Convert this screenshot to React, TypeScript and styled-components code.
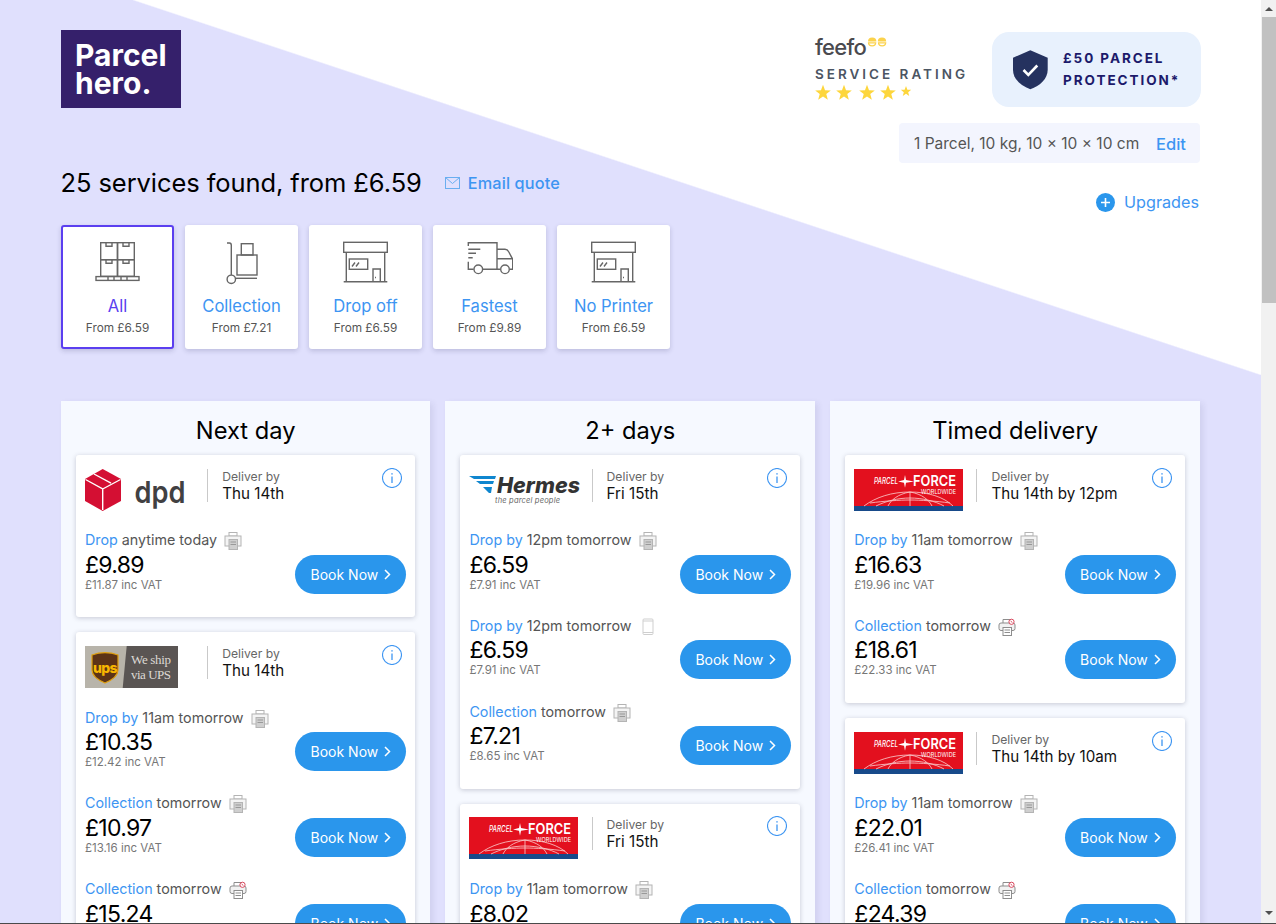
import React from "react";
import styled, { createGlobalStyle } from "styled-components";

const FONT = `Inter, "Noto Sans", "Liberation Sans", sans-serif`;
const BLUE = "#3d95f2";

const Global = createGlobalStyle`
  html, body { margin: 0; padding: 0; height: 924px; overflow: hidden; background: #e0e0fd; }
  body { font-family: ${FONT}; -webkit-font-smoothing: auto; }
  * { box-sizing: border-box; }
`;

const Shell = styled.div`
  display: flex;
  width: 1276px;
  height: 924px;
  border-bottom: 1px solid #4a4a4a;
  overflow: hidden;
`;
const Page = styled.main`
  flex: 0 0 1261px;
  height: 923px;
  overflow: hidden;
  padding: 30px 61px 0;
  background: linear-gradient(to top right, #e0e0fd 49.9%, #fff 50.1%) 133px 0 / 1128px 375px no-repeat, #e0e0fd;
`;
const Scrollbar = styled.div`
  flex: 0 0 15px;
  display: flex;
  flex-direction: column;
  align-items: stretch;
  background: #f1f1f1;
`;
const ScrollArrow = styled.div<{ $down?: boolean }>`
  height: 17px;
  flex: none;
  display: flex;
  align-items: center;
  justify-content: center;
  margin-bottom: ${(p) => (p.$down ? "2px" : "0")};
  &::after {
    content: "";
    border-left: 4px solid transparent;
    border-right: 4px solid transparent;
    ${(p) => (p.$down ? "border-top: 4px solid #505050;" : "border-bottom: 4px solid #505050;")}
  }
`;
const ScrollThumb = styled.div`
  height: 286px;
  flex: none;
  margin-left: 1px;
  background: #c1c1c1;
`;
const ScrollRest = styled.div`
  flex: 1;
`;

const Top = styled.header`
  display: flex;
  justify-content: space-between;
  align-items: flex-start;
`;
const TopLeft = styled.div`
  display: flex;
  flex-direction: column;
  align-items: flex-start;
`;
const TopRight = styled.div`
  display: flex;
  flex-direction: column;
  align-items: flex-end;
  padding-top: 2px;
`;
const Logo = styled.div`
  width: 120px;
  height: 78px;
  background: #35206b;
  color: #fff;
  font-weight: 700;
  font-size: 30px;
  line-height: 28px;
  padding: 11px 0 0 14px;
`;
const TitleRow = styled.div`
  display: flex;
  align-items: center;
  margin-top: 58px;
  height: 32px;
`;
const Title = styled.h1`
  margin: 0 0 0 -0.5px;
  font-size: 25.5px;
  font-weight: 400;
  color: #000;
  letter-spacing: -0.08px;
`;
const EmailLink = styled.a`
  display: flex;
  align-items: center;
  margin: 2px 0 0 23px;
  color: ${BLUE};
  font-size: 16.3px;
  font-weight: 500;
  letter-spacing: 0.12px;
  gap: 8px;
`;
const Tabs = styled.div`
  display: flex;
  gap: 11px;
  margin-top: 27px;
`;
const Tab = styled.div<{ $active?: boolean }>`
  width: 113px;
  height: 124px;
  background: #fff;
  border-radius: 3px;
  box-shadow: 0 2px 5px rgba(30, 30, 80, 0.18);
  display: flex;
  flex-direction: column;
  align-items: center;
  padding-top: ${(p) => (p.$active ? "14px" : "16px")};
  border: ${(p) => (p.$active ? "2px solid #5b3ff0" : "none")};
`;
const TabIcon = styled.div`
  height: 46px;
  display: flex;
  align-items: flex-start;
  justify-content: center;
`;
const TabLabel = styled.div<{ $active?: boolean }>`
  margin-top: 9px;
  font-size: 16.6px;
  line-height: 20px;
  color: ${(p) => (p.$active ? "#5b3ff0" : BLUE)};
`;
const TabFrom = styled.div`
  margin-top: 3px;
  font-size: 11.8px;
  line-height: 18px;
  color: #555;
`;

const TrustRow = styled.div`
  display: flex;
  align-items: flex-start;
  margin-right: -1px;
`;
const Feefo = styled.div`
  width: 177px;
  padding-top: 5px;
`;
const FeefoLogo = styled.div`
  display: flex;
  align-items: flex-start;
  height: 21px;
  font-size: 22px;
  line-height: 21px;
  font-weight: 500;
  color: #4a4a4f;
  letter-spacing: -0.7px;
`;
const RatingLabel = styled.div`
  margin-top: 6px;
  font-size: 13.5px;
  line-height: 20px;
  font-weight: 600;
  color: #4b5563;
  letter-spacing: 3px;
  white-space: nowrap;
`;
const Protection = styled.div`
  width: 209px;
  height: 75px;
  border-radius: 17px;
  background: #e8f1fd;
  display: flex;
  align-items: center;
  padding-left: 21px;
  padding-bottom: 2px;
  gap: 15px;
`;
const ProtectionText = styled.div`
  font-size: 13.5px;
  line-height: 22px;
  font-weight: 700;
  letter-spacing: 1.95px;
  color: #1c1a6b;
  white-space: nowrap;
`;
const Summary = styled.div`
  margin-top: 16px;
  width: 301px;
  height: 40px;
  border-radius: 4px;
  background: #f3f5fe;
  display: flex;
  align-items: center;
  justify-content: space-between;
  padding: 1px 14px 0 15px;
  font-size: 15.5px;
  color: #555;
  white-space: nowrap;
`;
const EditLink = styled.a`
  color: ${BLUE};
  font-size: 16.5px;
  font-weight: 500;
`;
const Upgrades = styled.a`
  margin-top: 29px;
  margin-right: 1px;
  display: flex;
  align-items: center;
  gap: 9px;
  color: ${BLUE};
  font-size: 16.2px;
  height: 20px;
`;
const PlusDot = styled.span`
  width: 19px;
  height: 19px;
  border-radius: 50%;
  background: #2a96ec;
  display: flex;
  align-items: center;
  justify-content: center;
`;

const Columns = styled.section`
  display: grid;
  grid-template-columns: 369.4px 369.9px 369.7px;
  gap: 15px;
  margin-top: 52px;
  align-items: start;
`;
const Column = styled.div`
  background: #f6f9ff;
  padding: 0 15px;
  height: 540px;
  box-shadow: 3px 2px 6px rgba(40, 40, 90, 0.09);
`;
const ColumnTitle = styled.h2`
  margin: 0;
  height: 54px;
  line-height: 59px;
  text-align: center;
  font-size: 23.7px;
  font-weight: 400;
  color: #000;
`;
const Card = styled.article`
  background: #fff;
  border-radius: 3px;
  box-shadow: 0 1px 5px rgba(30, 30, 60, 0.22);
  padding: 0 9px 2px;
  margin-bottom: 15px;
`;
const CardHead = styled.div`
  display: flex;
  align-items: flex-start;
  height: 74.9px;
  padding-top: 13.6px;
`;
const LogoSlot = styled.div`
  width: 122.2px;
  height: 42px;
  flex: none;
  display: flex;
`;
const Divider = styled.div`
  width: 1px;
  height: 33px;
  background: #c9c9c9;
  margin-right: 14px;
  flex: none;
`;
const Deliver = styled.div`
  display: flex;
  flex-direction: column;
`;
const DeliverLabel = styled.div`
  font-size: 12.2px;
  line-height: 15px;
  color: #666;
`;
const DeliverValue = styled.div`
  font-size: 15.2px;
  line-height: 20px;
  color: #111;
  white-space: nowrap;
`;
const InfoButton = styled.div`
  margin-left: auto;
  margin-right: 4px;
  margin-top: -1px;
  width: 20px;
  height: 20px;
`;
const Row = styled.div`
  display: flex;
  justify-content: space-between;
  align-items: flex-start;
  height: 85.6px;
`;
const RowInfo = styled.div`
  display: flex;
  flex-direction: column;
`;
const RowLine = styled.div`
  display: flex;
  align-items: center;
  height: 20px;
  font-size: 14.3px;
  color: #555;
  white-space: nowrap;
`;
const RowHow = styled.span`
  color: ${BLUE};
  margin-right: 4px;
`;
const MiniIcon = styled.span`
  margin-left: 7px;
  margin-top: 3px;
  display: flex;
`;
const Price = styled.div`
  font-size: 23px;
  line-height: 30px;
  letter-spacing: -0.7px;
  color: #000;
`;
const Vat = styled.div`
  font-size: 11.5px;
  line-height: 14px;
  margin-top: -2px;
  color: #777;
`;
const BookButton = styled.button`
  margin-top: 25px;
  width: 111px;
  height: 39px;
  border: 0;
  border-radius: 20px;
  background: #2a96ec;
  color: #fff;
  font-family: ${FONT};
  font-size: 14px;
  display: flex;
  align-items: center;
  justify-content: center;
  gap: 6px;
  padding: 0;
`;

/* ---------- drawings ---------- */

const ink = { fill: "none", stroke: "#666", strokeWidth: 1.4 } as const;

const PalletIcon = () => (
  <svg width="45" height="41" viewBox="95 241 45 41" {...ink}>
    <rect x="100.7" y="242.7" width="16.6" height="17" />
    <rect x="117.7" y="242.7" width="16.6" height="17" />
    <rect x="100.7" y="259.7" width="16.6" height="16.6" />
    <rect x="117.7" y="259.7" width="16.6" height="16.6" />
    <path d="M106 243v3.2h6V243M123 243v3.2h6V243M106 260v3.2h6V260M123 260v3.2h6V260" />
    <rect x="96" y="276.6" width="43" height="3.8" />
    <path d="M108 276.6v3.8M114 276.6v3.8M121 276.6v3.8M127 276.6v3.8" />
  </svg>
);
const TrolleyIcon = () => (
  <svg width="36" height="44" viewBox="222 241 36 44" {...ink}>
    <path d="M225 243h2.5c1.2 0 1.8 1 1.8 2.2V275" />
    <circle cx="229.3" cy="279.3" r="4.2" />
    <path d="M234 278.3h21" />
    <rect x="235" y="255" width="20" height="20" />
    <rect x="239.3" y="243.7" width="11.7" height="11.3" />
  </svg>
);
const ShopIcon = () => (
  <svg width="46" height="42" viewBox="343 241 46 42" {...ink}>
    <rect x="343.7" y="242.3" width="43.6" height="10" />
    <path d="M346.3 252.3v29.4M384.7 252.3v29.4M343.7 281.7h43.6" />
    <rect x="349.3" y="259" width="18.4" height="10.3" />
    <path d="M352 266.5l3-4M356 266.5l3-4" />
    <path d="M373 281.7V269h7.3v12.7" />
    <path d="M375 277.5h1" />
  </svg>
);
const TruckIcon = () => (
  <svg width="46" height="34" viewBox="466 245 46 34" {...ink}>
    <path d="M467.3 250v-3.3H496v26.6M467.3 253.3h12M467.3 257.3h7.7M467.3 261.7h4.4" />
    <path d="M467.3 265.7v7.6h5.4M482 273.3h17.3M508.7 273.3h3v-10l-4-7.5c-.8-1.6-1.8-2.5-3.7-2.5h-8M496 262.7h15.7" />
    <circle cx="477.3" cy="273.3" r="4.3" />
    <circle cx="504" cy="273.3" r="4.3" />
  </svg>
);
const MailIcon = () => (
  <svg width="15" height="12" viewBox="0 0 15 12" fill="none" stroke="#6aaef0" strokeWidth="1">
    <rect x="0.5" y="0.5" width="14" height="11" />
    <path d="M0.5 0.5l7 6 7-6" />
  </svg>
);
const Shield = () => (
  <svg width="35" height="40" viewBox="1013 49 35 40" style={{ marginTop: 2 }}>
    <path d="M1030.3 49.3l17.4 7.4v12c0 9-7.5 16-17.4 19.6-9.9-3.6-17.3-10.6-17.3-19.6v-12z" fill="#25325f" />
    <path d="M1023.5 69l4.8 4.8 9-9.3" fill="none" stroke="#fff" strokeWidth="2.6" />
  </svg>
);
const FeefoEyes = () => (
  <svg width="20" height="10" viewBox="0 0 20 10" style={{ marginLeft: 1 }}>
    <path d="M1 4.4a4.2 4 0 0 1 8.4 0zM10.8 4.4a4.2 4 0 0 1 8.4 0z" fill="#fbd24c" />
    <path d="M1.5 5.8a3.6 3 0 0 0 7.2 0zM11.5 5.8a3.6 3 0 0 0 7.2 0z" fill="none" stroke="#fbd24c" strokeWidth="1.2" />
  </svg>
);
const starPath = (cx: number, cy: number, r: number) => {
  const pts: string[] = [];
  for (let i = 0; i < 10; i++) {
    const a = (Math.PI / 5) * i - Math.PI / 2;
    const rr = i % 2 ? r * 0.42 : r;
    pts.push(`${(cx + rr * Math.cos(a)).toFixed(2)},${(cy + rr * Math.sin(a)).toFixed(2)}`);
  }
  return pts.join(" ");
};
const Stars = () => (
  <svg width="100" height="20" viewBox="815 85 100 20" style={{ display: "block" }}>
    {[823, 844, 867, 888].map((x) => (
      <polygon key={x} points={starPath(x, 94, 8.2)} fill="#fdd63c" />
    ))}
    <polygon points={starPath(906, 92.5, 5.5)} fill="#fdd63c" />
  </svg>
);
const InfoIcon = () => (
  <svg width="20" height="20" viewBox="0 0 20 20" fill="none" stroke="#3d95f2" strokeWidth="1.1">
    <circle cx="10" cy="10" r="9.5" />
    <path d="M10 8.5v6.5" strokeWidth="1.3" />
    <path d="M10 5.2v1.4" strokeWidth="1.5" />
  </svg>
);
const Chevron = () => (
  <svg width="7" height="11" viewBox="0 0 7 11" fill="none" stroke="#fff" strokeWidth="1.5">
    <path d="M1 1l4.5 4.5L1 10" />
  </svg>
);
const PaperIcon = () => (
  <svg width="18" height="18" viewBox="0 0 18 18" fill="none" stroke="#b4b4b4" strokeWidth="1">
    <rect x="5" y="0.5" width="8" height="3.5" />
    <rect x="1" y="4" width="16" height="10" fill="#f4f4f4" />
    <rect x="5" y="7.5" width="8.5" height="10" fill="#cfcfcf" />
    <path d="M6.5 10h5.5M6.5 12.5h5.5" stroke="#999" />
  </svg>
);
const PhoneIcon = () => (
  <svg width="18" height="18" viewBox="0 0 18 18" fill="none" stroke="#cfcfcf" strokeWidth="1">
    <rect x="4" y="1" width="10" height="15.5" rx="1" />
    <path d="M4 3h10M4 14.5h10" />
  </svg>
);
const PrinterIcon = () => (
  <svg width="18" height="18" viewBox="0 0 18 18" fill="none" stroke="#8d8d8d" strokeWidth="1">
    <path d="M5 5V1.5h8V5" />
    <rect x="1" y="5" width="16" height="7.5" rx="2" fill="#f2f2f2" />
    <rect x="5" y="9.5" width="8.5" height="8" fill="#fff" />
    <path d="M6.5 12h5.5M6.5 14.5h5.5" />
    <circle cx="13.5" cy="3.8" r="2.6" fill="#fff" stroke="#d9475d" />
    <path d="M12.6 3l1.8 1.6" stroke="#d9475d" />
  </svg>
);
const MINI = { paper: PaperIcon, phone: PhoneIcon, printer: PrinterIcon };

const DpdLogo = () => (
  <svg width="101" height="42" viewBox="85 469 101 42">
    <path d="M102.7 469L121 479v22l-18.3 10L85 501v-22z" fill="#d40f33" />
    <path d="M85.5 479.5l17.2 9.5V510M120.5 479.5l-17.8 9.5M94 474l17 9.2" fill="none" stroke="#fff" strokeWidth="1.4" />
    <text x="134.5" y="502.5" fontFamily="Inter, sans-serif" fontWeight="600" fontSize="30" fill="#414042" textLength="51" lengthAdjust="spacingAndGlyphs">dpd</text>
  </svg>
);
const UpsLogo = () => (
  <svg width="93" height="42" viewBox="85 646 93 42">
    <rect x="85" y="646" width="93" height="42" fill="#b8b4aa" />
    <path d="M126.7 646H178v42h-55.3z" fill="#5a5553" />
    <path d="M92 655c8-3 18-3 26 0v15c0 6-6 10-13 13-7-3-13-7-13-13z" fill="#5c3317" stroke="#e0a010" strokeWidth="1.2" />
    <text x="105" y="673" textAnchor="middle" fontFamily="Inter, sans-serif" fontWeight="800" fontSize="14" letterSpacing="-0.6" fill="#f7b600">ups</text>
    <text x="131" y="664" fontFamily="'Liberation Serif', serif" fontSize="13" fill="#ddd9d4" textLength="40">We ship</text>
    <text x="131" y="679" fontFamily="'Liberation Serif', serif" fontSize="13" fill="#ddd9d4" textLength="40">via UPS</text>
  </svg>
);
const HermesLogo = () => (
  <svg width="112" height="42" viewBox="469 469 112 42">
    <path d="M469 476h27l-1 3h-21zM476 481h18l-1 3h-13zM483 487h9l-1 6h-2z" fill="#0f86cf" />
    <text x="497" y="493" fontFamily="Inter, sans-serif" fontWeight="800" fontStyle="italic" fontSize="22" fill="#333" textLength="83" lengthAdjust="spacingAndGlyphs">Hermes</text>
    <text x="495" y="503" fontFamily="Inter, sans-serif" fontStyle="italic" fontSize="7.5" fill="#666" textLength="65">the parcel people</text>
  </svg>
);
const ForceLogo = () => (
  <svg width="109" height="42" viewBox="854 469 109 42">
    <rect x="854" y="469" width="109" height="37" fill="#e3101e" />
    <rect x="854" y="506" width="109" height="5" fill="#174a8a" />
    <g fill="none" stroke="#fbd0d0" strokeWidth="0.8">
      <path d="M864 506c12-9 28-14 46-14s34 5 43 14" />
      <path d="M876 506c10-5 22-8 34-8s25 3 34 8" />
      <path d="M888 506c3-6 10-12 22-14M932 506c-3-6-10-12-22-14M910 492v14" />
      <path d="M870 503c14-2 30-3 40-3s26 1 40 3" />
    </g>
    <text x="874" y="484" fontFamily="Inter, sans-serif" fontStyle="italic" fontWeight="500" fontSize="8.5" fill="#fff" textLength="24" lengthAdjust="spacingAndGlyphs">PARCEL</text>
    <path d="M905 475l1 5 8 1.5-8 1.2-1 5-1-5-6-1.2 6-1.5z" fill="#fff" />
    <text x="913" y="486" fontFamily="Inter, sans-serif" fontWeight="600" fontSize="15" fill="#fff" textLength="43" lengthAdjust="spacingAndGlyphs">FORCE</text>
    <text x="921" y="494" fontFamily="Inter, sans-serif" fontSize="5.5" fill="#fff" textLength="35">WORLDWIDE</text>
  </svg>
);

/* ---------- data ---------- */

type RowData = { how: string; rest: string; price: string; vat: string; icon: keyof typeof MINI };
type CardData = { logo: React.ComponentType; when: string; rows: RowData[] };

const dropBy = (t: string) => ({ how: "Drop by", rest: t });
const coll = { how: "Collection", rest: "tomorrow" };

const COLUMNS: { title: string; cards: CardData[] }[] = [
  {
    title: "Next day",
    cards: [
      {
        logo: DpdLogo,
        when: "Thu 14th",
        rows: [{ how: "Drop", rest: "anytime today", price: "£9.89", vat: "£11.87 inc VAT", icon: "paper" }],
      },
      {
        logo: UpsLogo,
        when: "Thu 14th",
        rows: [
          { ...dropBy("11am tomorrow"), price: "£10.35", vat: "£12.42 inc VAT", icon: "paper" },
          { ...coll, price: "£10.97", vat: "£13.16 inc VAT", icon: "paper" },
          { ...coll, price: "£15.24", vat: "£18.29 inc VAT", icon: "printer" },
        ],
      },
    ],
  },
  {
    title: "2+ days",
    cards: [
      {
        logo: HermesLogo,
        when: "Fri 15th",
        rows: [
          { ...dropBy("12pm tomorrow"), price: "£6.59", vat: "£7.91 inc VAT", icon: "paper" },
          { ...dropBy("12pm tomorrow"), price: "£6.59", vat: "£7.91 inc VAT", icon: "phone" },
          { ...coll, price: "£7.21", vat: "£8.65 inc VAT", icon: "paper" },
        ],
      },
      {
        logo: ForceLogo,
        when: "Fri 15th",
        rows: [{ ...dropBy("11am tomorrow"), price: "£8.02", vat: "£9.62 inc VAT", icon: "paper" }],
      },
    ],
  },
  {
    title: "Timed delivery",
    cards: [
      {
        logo: ForceLogo,
        when: "Thu 14th by 12pm",
        rows: [
          { ...dropBy("11am tomorrow"), price: "£16.63", vat: "£19.96 inc VAT", icon: "paper" },
          { ...coll, price: "£18.61", vat: "£22.33 inc VAT", icon: "printer" },
        ],
      },
      {
        logo: ForceLogo,
        when: "Thu 14th by 10am",
        rows: [
          { ...dropBy("11am tomorrow"), price: "£22.01", vat: "£26.41 inc VAT", icon: "paper" },
          { ...coll, price: "£24.39", vat: "£29.27 inc VAT", icon: "printer" },
        ],
      },
    ],
  },
];

const TABS = [
  { label: "All", from: "From £6.59", icon: PalletIcon, active: true },
  { label: "Collection", from: "From £7.21", icon: TrolleyIcon },
  { label: "Drop off", from: "From £6.59", icon: ShopIcon },
  { label: "Fastest", from: "From £9.89", icon: TruckIcon },
  { label: "No Printer", from: "From £6.59", icon: ShopIcon },
];

const ServiceRow = ({ how, rest, price, vat, icon }: RowData) => {
  const Icon = MINI[icon];
  return (
    <Row>
      <RowInfo>
        <RowLine>
          <RowHow>{how}</RowHow>
          {rest}
          <MiniIcon>
            <Icon />
          </MiniIcon>
        </RowLine>
        <Price>{price}</Price>
        <Vat>{vat}</Vat>
      </RowInfo>
      <BookButton>
        Book Now <Chevron />
      </BookButton>
    </Row>
  );
};

export default function App() {
  return (
    <>
      <Global />
      <Shell>
        <Page>
          <Top>
            <TopLeft>
              <Logo>
                Parcel
                <br />
                hero.
              </Logo>
              <TitleRow>
                <Title>25 services found, from £6.59</Title>
                <EmailLink>
                  <MailIcon />
                  Email quote
                </EmailLink>
              </TitleRow>
              <Tabs>
                {TABS.map((t) => (
                  <Tab key={t.label} $active={t.active}>
                    <TabIcon>
                      <t.icon />
                    </TabIcon>
                    <TabLabel $active={t.active}>{t.label}</TabLabel>
                    <TabFrom>{t.from}</TabFrom>
                  </Tab>
                ))}
              </Tabs>
            </TopLeft>
            <TopRight>
              <TrustRow>
                <Feefo>
                  <FeefoLogo>
                    feefo
                    <FeefoEyes />
                  </FeefoLogo>
                  <RatingLabel>SERVICE RATING</RatingLabel>
                  <Stars />
                </Feefo>
                <Protection>
                  <Shield />
                  <ProtectionText>
                    £50 PARCEL
                    <br />
                    PROTECTION*
                  </ProtectionText>
                </Protection>
              </TrustRow>
              <Summary>
                1 Parcel, 10 kg, 10 × 10 × 10 cm
                <EditLink>Edit</EditLink>
              </Summary>
              <Upgrades>
                <PlusDot>
                  <svg width="9" height="9" viewBox="0 0 9 9" stroke="#fff" strokeWidth="1.6">
                    <path d="M4.5 0v9M0 4.5h9" />
                  </svg>
                </PlusDot>
                Upgrades
              </Upgrades>
            </TopRight>
          </Top>
          <Columns>
            {COLUMNS.map((col) => (
              <Column key={col.title}>
                <ColumnTitle>{col.title}</ColumnTitle>
                {col.cards.map((card, i) => (
                  <Card key={i}>
                    <CardHead>
                      <LogoSlot>
                        <card.logo />
                      </LogoSlot>
                      <Divider />
                      <Deliver>
                        <DeliverLabel>Deliver by</DeliverLabel>
                        <DeliverValue>{card.when}</DeliverValue>
                      </Deliver>
                      <InfoButton>
                        <InfoIcon />
                      </InfoButton>
                    </CardHead>
                    {card.rows.map((r, j) => (
                      <ServiceRow key={j} {...r} />
                    ))}
                  </Card>
                ))}
              </Column>
            ))}
          </Columns>
        </Page>
        <Scrollbar>
          <ScrollArrow />
          <ScrollThumb />
          <ScrollRest />
          <ScrollArrow $down />
        </Scrollbar>
      </Shell>
    </>
  );
}
